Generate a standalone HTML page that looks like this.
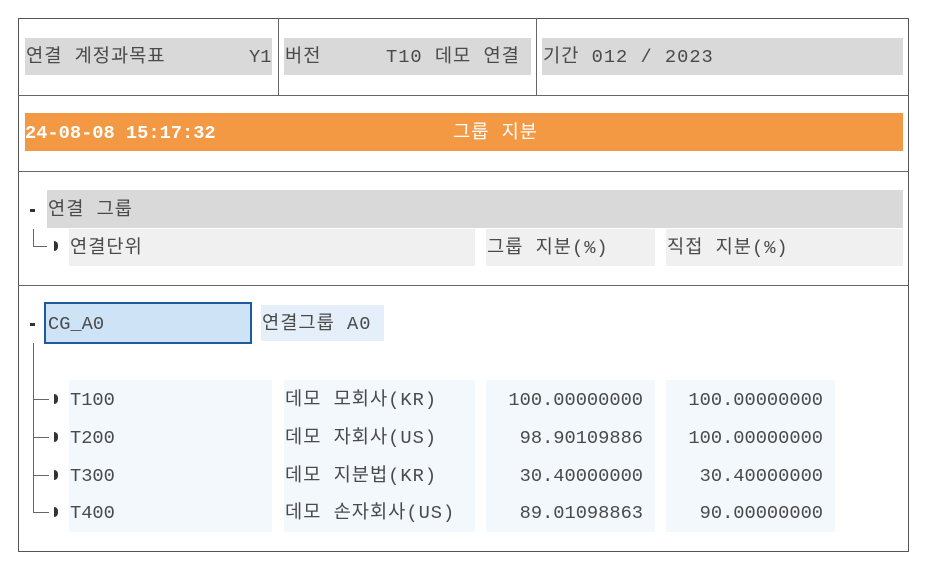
<!DOCTYPE html>
<html><head><meta charset="utf-8"><style>
*{margin:0;padding:0;box-sizing:border-box}
body{width:930px;height:567px;background:#fff;position:relative;overflow:hidden;font-family:"Liberation Mono","Noto Sans CJK KR",monospace;font-size:18.7px;color:#4a4a4a}
.a{position:absolute}
.t{position:absolute;white-space:pre;line-height:20px}
.k{letter-spacing:1px}
.g{background:#d9d9d9}
.l{background:#f0f0f0}
.b{background:#f3f8fd}
.hl{position:absolute;height:1px;background:#666}
.vl{position:absolute;width:1px;background:#666}
.tri{position:absolute;width:4px;height:10px;background:#333;border-radius:0 5px 5px 0}
</style></head><body>
<div class="a" style="left:18px;top:18px;width:891px;height:534px;border:1px solid #555"></div>
<div class="hl" style="left:18px;top:95px;width:891px"></div>
<div class="hl" style="left:18px;top:171px;width:891px"></div>
<div class="hl" style="left:18px;top:285px;width:891px"></div>
<div class="vl" style="left:278px;top:18px;height:77px"></div>
<div class="vl" style="left:536px;top:18px;height:77px"></div>

<div class="a g" style="left:25px;top:38px;width:247px;height:37px"></div>
<div class="t k" style="left:26px;top:47px">연결 계정과목표</div>
<div class="t" style="left:249px;top:47px">Y1</div>
<div class="a g" style="left:284px;top:38px;width:247px;height:37px"></div>
<div class="t k" style="left:285px;top:47px">버전</div>
<div class="t k" style="left:386px;top:47px">T10 데모 연결</div>
<div class="a g" style="left:542px;top:38px;width:361px;height:37px"></div>
<div class="t k" style="left:543px;top:47px">기간 012 / 2023</div>

<div class="a" style="left:25px;top:113px;width:878px;height:38px;background:#f39843"></div>
<div class="t" style="left:25px;top:123px;color:#fff;font-weight:bold">24-08-08 15:17:32</div>
<div class="t k" style="left:453px;top:123px;color:#fff">그룹 지분</div>

<div class="a" style="left:30px;top:209px;width:5px;height:3px;background:#333"></div>
<div class="a g" style="left:47px;top:190px;width:856px;height:38px"></div>
<div class="t k" style="left:48px;top:200px">연결 그룹</div>
<div class="vl" style="left:33px;top:229px;height:17px"></div>
<div class="hl" style="left:33px;top:246px;width:14px"></div>
<div class="tri" style="left:54px;top:241px"></div>
<div class="a l" style="left:69px;top:229px;width:406px;height:37px"></div>
<div class="t k" style="left:70px;top:238px">연결단위</div>
<div class="a l" style="left:486px;top:229px;width:169px;height:37px"></div>
<div class="t k" style="left:487px;top:238px">그룹 지분(%)</div>
<div class="a l" style="left:666px;top:229px;width:237px;height:37px"></div>
<div class="t k" style="left:667px;top:238px">직접 지분(%)</div>

<div class="a" style="left:30px;top:323px;width:5px;height:3px;background:#333"></div>
<div class="a" style="left:44px;top:302px;width:208px;height:42px;background:#cfe3f6;border:2px solid #1f5a9a"></div>
<div class="t" style="left:48px;top:314px">CG_A0</div>
<div class="a" style="left:261px;top:305px;width:123px;height:36px;background:#e4effa"></div>
<div class="t k" style="left:262px;top:314px">연결그룹 A0</div>

<div class="vl" style="left:33px;top:343px;height:170px"></div>
<div class="hl" style="left:33px;top:399px;width:16px"></div>
<div class="hl" style="left:33px;top:437px;width:16px"></div>
<div class="hl" style="left:33px;top:475px;width:16px"></div>
<div class="hl" style="left:33px;top:512px;width:16px"></div>
<div class="tri" style="left:54px;top:394px"></div>
<div class="tri" style="left:54px;top:432px"></div>
<div class="tri" style="left:54px;top:470px"></div>
<div class="tri" style="left:54px;top:507px"></div>

<div class="a b" style="left:69px;top:380px;width:203px;height:152px"></div>
<div class="a b" style="left:284px;top:380px;width:191px;height:152px"></div>
<div class="a b" style="left:486px;top:380px;width:169px;height:152px"></div>
<div class="a b" style="left:666px;top:380px;width:169px;height:152px"></div>

<div class="t" style="left:70px;top:390px">T100</div>
<div class="t" style="left:70px;top:428px">T200</div>
<div class="t" style="left:70px;top:466px">T300</div>
<div class="t" style="left:70px;top:503px">T400</div>
<div class="t k" style="left:285px;top:390px">데모 모회사(KR)</div>
<div class="t k" style="left:285px;top:428px">데모 자회사(US)</div>
<div class="t k" style="left:285px;top:466px">데모 지분법(KR)</div>
<div class="t k" style="left:285px;top:503px">데모 손자회사(US)</div>
<div class="t" style="right:287px;top:390px">100.00000000</div>
<div class="t" style="right:287px;top:428px">98.90109886</div>
<div class="t" style="right:287px;top:466px">30.40000000</div>
<div class="t" style="right:287px;top:503px">89.01098863</div>
<div class="t" style="right:107px;top:390px">100.00000000</div>
<div class="t" style="right:107px;top:428px">100.00000000</div>
<div class="t" style="right:107px;top:466px">30.40000000</div>
<div class="t" style="right:107px;top:503px">90.00000000</div>
</body></html>
